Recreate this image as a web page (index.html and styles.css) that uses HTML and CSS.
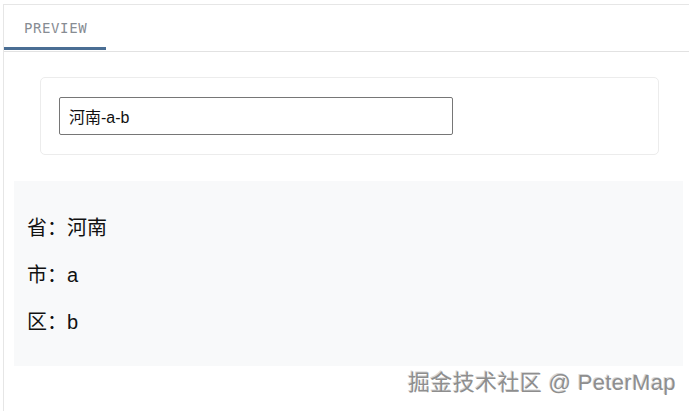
FILE: index.html
```html
<!DOCTYPE html>
<html>

<head>
  <meta charset="utf-8">
  <link rel="stylesheet" href="styles.css">
</head>

<body>

  <div class="frame">
    <div class="tab-bar">
      <div class="tab tab-active">PREVIEW</div>
    </div>

    <div class="preview">
      <div class="card">
        <input class="address-input" type="text" value="河南-a-b">
      </div>

      <div class="result">
        <p class="result-line">省：河南</p>
        <p class="result-line">市：a</p>
        <p class="result-line">区：b</p>
      </div>
    </div>
  </div>

  <div class="watermark">掘金技术社区 @ PeterMap</div>

</body>

</html>
```

FILE: styles.css
```css
body {
  margin: 0;
  padding: 4px 0 0 3px;
  background-color: white;
  font-family: "Liberation Sans", "Noto Sans CJK SC", sans-serif;
  color: #222;
  overflow: hidden;
}

.frame {
  border-top: 1px solid #e6e6e6;
  border-left: 1px solid #e6e6e6;
  height: 420px;
}

.tab-bar {
  display: flex;
  height: 46px;
  border-bottom: 1px solid #e2e2e2;
}

.tab {
  width: 102px;
  box-sizing: border-box;
  padding: 15px 0 0 20px;
  font-family: "DejaVu Sans Mono", monospace;
  font-size: 14px;
  letter-spacing: 0.6px;
  color: #878c93;
}

.tab-active {
  border-bottom: 3px solid #4a6e94;
  height: 45px;
}

.preview {
  padding: 25px 0 0 10px;
}

.card {
  width: 619px;
  box-sizing: border-box;
  margin-left: 26px;
  padding: 19px 18px;
  border: 1px solid #ececec;
  border-radius: 5px;
}

.address-input {
  display: block;
  width: 394px;
  height: 38px;
  box-sizing: border-box;
  margin: 0;
  padding: 0 9px;
  border: 1px solid #767676;
  border-radius: 2px;
  font-family: "Liberation Sans", "Noto Sans CJK SC", sans-serif;
  font-size: 16px;
  color: #111;
  outline: none;
}

.result {
  width: 669px;
  box-sizing: border-box;
  margin-top: 26px;
  padding: 33px 13px 30px;
  background-color: #f8f9fa;
}

.result-line {
  margin: 0 0 19px;
  font-size: 20px;
  line-height: 28px;
  color: #111;
}

.result-line:last-child {
  margin-bottom: 0;
}

.watermark {
  position: absolute;
  left: 408px;
  top: 369px;
  font-family: "Liberation Sans", "Noto Sans CJK SC", sans-serif;
  font-size: 22px;
  line-height: 28px;
  letter-spacing: 0.35px;
  color: #8e8e8e;
  text-shadow: 1px 1px 0 #fff, -1px -1px 0 #d8d8d8;
  white-space: nowrap;
}
```
